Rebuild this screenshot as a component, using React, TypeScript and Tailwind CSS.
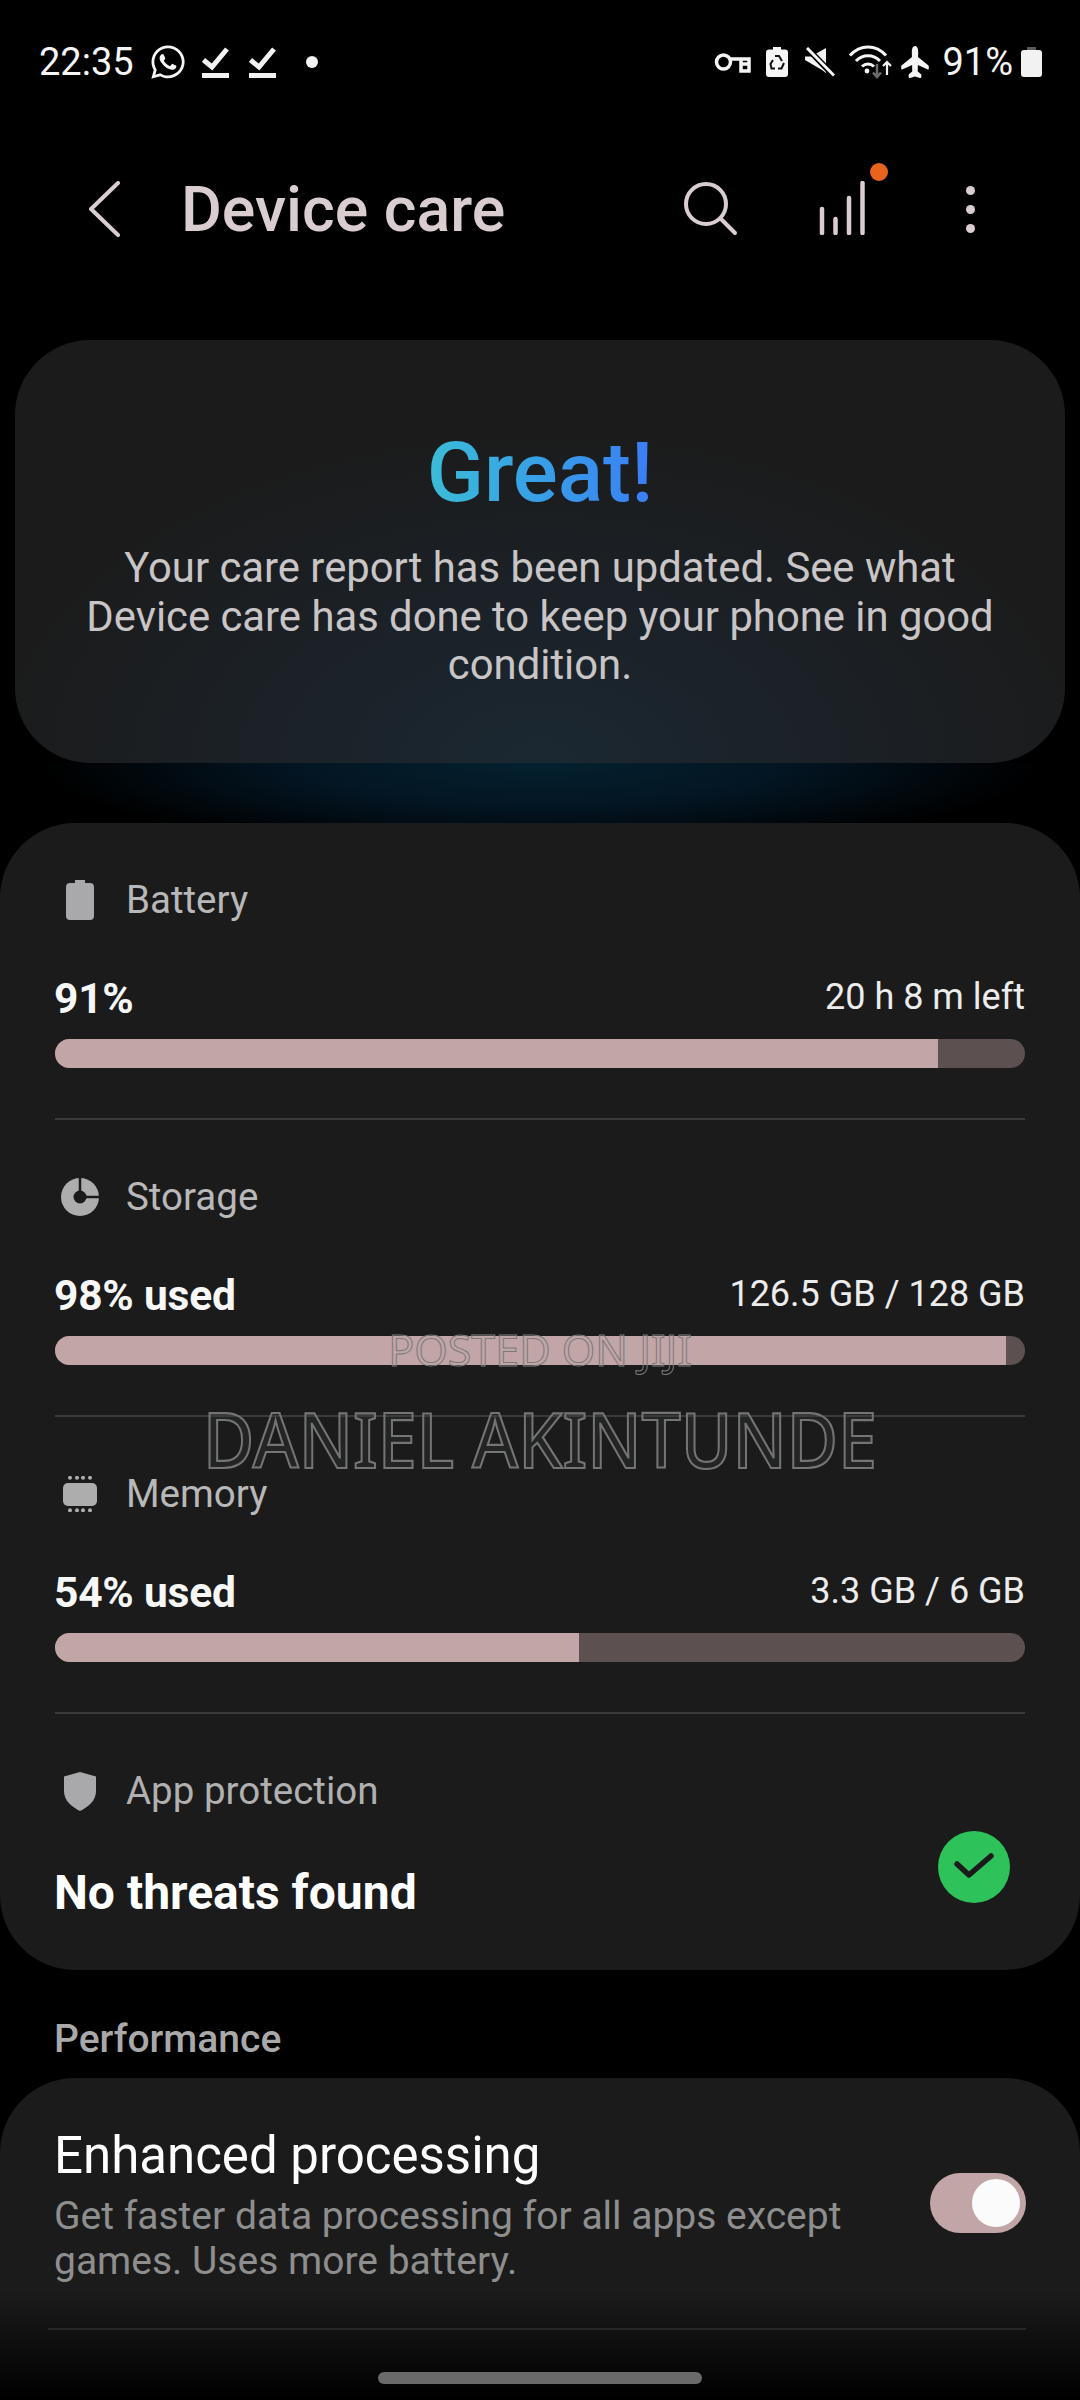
import React from "react";
import { FaWhatsapp } from "react-icons/fa";
import { IoAirplane } from "react-icons/io5";

const CheckDown = () => (
  <svg width="27" height="32" viewBox="0 0 27 32" fill="none" stroke="#f2f2f2">
    <path d="M1.5 14 L10 21 L25 3" strokeWidth="5" />
    <path d="M0 29.5 H27" strokeWidth="5" />
  </svg>
);

const Key = () => (
  <svg width="37" height="22" viewBox="0 0 37 22" fill="none" stroke="#f5f5f5" strokeWidth="3.5">
    <circle cx="9.5" cy="11" r="7" />
    <path d="M16 8 H35 V13 M27 8 V20 H35 V13 M27 13 H35" />
  </svg>
);

const BatteryRecycle = () => (
  <svg width="22" height="30" viewBox="0 0 22 30">
    <path d="M7 0 H15 V2.5 H19 Q22 2.5 22 5.5 V27 Q22 30 19 30 H3 Q0 30 0 27 V5.5 Q0 2.5 3 2.5 H7 Z" fill="#f5f5f5" />
    <path d="M9 9 L13 9 L16 14 M18 16 L15.5 21.5 H12 M9 21.5 H5.5 L4.5 17 L7 13" fill="none" stroke="#111" strokeWidth="2" />
  </svg>
);

const Mute = () => (
  <svg width="30" height="30" viewBox="0 0 30 30">
    <path d="M0 9.5 H6 L21 1 V26 L17 23 L0 13 Z" fill="#f5f5f5" />
    <path d="M1 0 L29 29" stroke="#000" strokeWidth="6" />
    <path d="M2 1 L29 28.5" stroke="#f5f5f5" strokeWidth="3" />
  </svg>
);

const Wifi = () => (
  <svg width="44" height="34" viewBox="0 0 44 34" fill="none">
    <path d="M1 10.5 C11 -1 27 -1 37 10.5" stroke="#f5f5f5" strokeWidth="3" />
    <path d="M7 16 C13.5 9 24.5 9 31 16" stroke="#f5f5f5" strokeWidth="3" />
    <path d="M13 21.5 C16.5 18 21.5 18 25 21.5" stroke="#f5f5f5" strokeWidth="3" />
    <circle cx="18" cy="26" r="2.4" fill="#f5f5f5" />
    <path d="M28 19 V32 M24 27.5 L28 32 L32 27.5" stroke="#6b6b6b" strokeWidth="2.5" />
    <path d="M38 30 V17 M34 21 L38 17 L42 21" stroke="#f5f5f5" strokeWidth="2.2" />
  </svg>
);

const Search = () => (
  <svg width="54" height="54" viewBox="0 0 54 54" fill="none" stroke="#d9cdd0" strokeWidth="4" strokeLinecap="round">
    <circle cx="22" cy="22" r="20" />
    <path d="M37 37 L51 51" />
  </svg>
);

const Stats = () => (
  <div className="relative w-[66px] h-[64px]">
    <svg className="absolute left-0 top-[4px]" width="48" height="54" viewBox="0 0 48 54" stroke="#d9cdd0" strokeWidth="4.5" strokeLinecap="round">
      <path d="M3 28 V52 M16.5 38 V52 M30 17 V52 M43.5 2 V52" />
    </svg>
    <span className="absolute right-[-3px] top-[-14px] w-[18px] h-[18px] rounded-full bg-[#e8641c]" />
  </div>
);

const BatteryIcon = () => (
  <svg width="28" height="40" viewBox="0 0 28 40">
    <path d="M9 0 H19 V3 H24 Q28 3 28 7 V36 Q28 40 24 40 H4 Q0 40 0 36 V7 Q0 3 4 3 H9 Z" fill="#a9a9ab" />
  </svg>
);

const StorageIcon = () => (
  <svg width="38" height="38" viewBox="0 0 38 38">
    <circle cx="19" cy="19" r="19" fill="#adadad" />
    <circle cx="19" cy="19" r="6.5" fill="#1b1b1b" />
    <path d="M19 0 V19 M19 19 H38" stroke="#1b1b1b" strokeWidth="2.5" />
  </svg>
);

const MemoryIcon = () => (
  <svg width="36" height="36" viewBox="0 0 36 36" fill="#adadad">
    <rect x="1" y="7" width="34" height="23" rx="5" />
    {[6, 13, 19, 26].map((x) => (
      <React.Fragment key={x}>
        <circle cx={x + 2} cy="1.8" r="2" />
        <circle cx={x + 2} cy="34.2" r="2" />
      </React.Fragment>
    ))}
  </svg>
);

const ShieldIcon = () => (
  <svg width="32" height="39" viewBox="0 0 32 39">
    <path d="M16 0 L32 4.5 V19 C32 29 24 35 16 39 C8 35 0 29 0 19 V4.5 Z" fill="#a9a9ab" />
  </svg>
);

type RowProps = {
  icon: React.ReactNode;
  label: string;
  value: string;
  right: string;
  fill: string;
};

const UsageRow = ({ icon, label, value, right, fill }: RowProps) => (
  <div className="h-[297px] mx-[55px] border-b-2 border-[#3a3a3a] flex flex-col">
    <div className="flex items-center h-[54px] mt-[50px]">
      <div className="w-[52px] ml-[-1px] flex justify-center">{icon}</div>
      <span className="ml-[20px] text-[38.5px] leading-[54px] text-[#b8b8b8]">{label}</span>
    </div>
    <div className="flex justify-between items-center h-[50px] mt-[47px]">
      <span className="ml-[-1px] text-[42.5px] font-bold text-[#f7f7f7] tracking-[-0.2px]">{value}</span>
      <span className="text-[36px] text-[#ececec] mt-[-5px]">{right}</span>
    </div>
    <div className="mt-[15px] h-[29px] rounded-full bg-[#5c5051] overflow-hidden">
      <div className={`h-full bg-[#c1a5a7] ${fill}`} />
    </div>
  </div>
);

export default function App() {
  return (
    <div className="relative h-[2400px] w-[1080px] overflow-hidden bg-black font-['Roboto',sans-serif]">
      {/* status bar */}
      <div className="flex items-center justify-between h-[124px] pl-[39px] pr-[38px] text-[#f5f5f5]">
        <div className="flex items-center">
          <span className="text-[38px] leading-none">22:35</span>
          <FaWhatsapp className="ml-[15px]" size={38} color="#f5f5f5" />
          <span className="ml-[15px]"><CheckDown /></span>
          <span className="ml-[20px]"><CheckDown /></span>
          <span className="ml-[30px] w-[12px] h-[12px] rounded-full bg-[#f2f2f2]" />
        </div>
        <div className="flex items-center">
          <Key />
          <span className="ml-[15px]"><BatteryRecycle /></span>
          <span className="ml-[17px]"><Mute /></span>
          <span className="ml-[14px]"><Wifi /></span>
          <IoAirplane className="ml-[5px] -rotate-90" size={34} color="#f5f5f5" />
          <span className="ml-[10px] text-[38px] leading-none">91%</span>
          <span className="ml-[8px]">
            <svg width="21" height="30" viewBox="0 0 21 30">
              <path d="M6 0 H15 V3 H6 Z" fill="#5a5a5a" />
              <path d="M3 3 H18 Q21 3 21 6 V27 Q21 30 18 30 H3 Q0 30 0 27 V6 Q0 3 3 3 Z" fill="#f2f2f2" />
            </svg>
          </span>
        </div>
      </div>

      {/* toolbar */}
      <div className="flex items-center h-[112px] mt-[29px] pl-[89px]">
        <svg width="32" height="56" viewBox="0 0 32 56" fill="none" stroke="#d9cdd0" strokeWidth="4" strokeLinecap="round" strokeLinejoin="round">
          <path d="M29 2 L2 28 L29 54" />
        </svg>
        <span className="ml-[60px] mt-[2px] text-[62.6px] leading-none font-medium text-[#d9cdd0]">Device care</span>
        <div className="ml-[179px]"><Search /></div>
        <div className="ml-[81px]"><Stats /></div>
        <div className="ml-[81px] flex flex-col gap-[10px]">
          <span className="w-[9px] h-[9px] rounded-full bg-[#d9cdd0]" />
          <span className="w-[9px] h-[9px] rounded-full bg-[#d9cdd0]" />
          <span className="w-[9px] h-[9px] rounded-full bg-[#d9cdd0]" />
        </div>
      </div>

      {/* hero card */}
      <div className="mt-[75px] mx-[15px] h-[423px] rounded-[75px] bg-[radial-gradient(ellipse_560px_340px_at_50%_100%,#1b2832_0%,#1b2127_50%,#1b1b1b_100%)] flex flex-col items-center pt-[89px]">
        <span className="text-[84px] leading-[88px] font-medium bg-gradient-to-r from-[#3cbdd6] to-[#3b7df5] bg-clip-text text-transparent">Great!</span>
        <p className="mt-[27px] w-[930px] text-center text-[41.8px] leading-[48.5px] text-[#c9c5c6]">
          Your care report has been updated. See what Device care has done to keep your phone in good condition.
        </p>
      </div>
      <div className="h-[60px] bg-[radial-gradient(ellipse_500px_90px_at_50%_0%,#05212f_0%,#031522_50%,#000000_100%)]" />

      {/* main card */}
      <div className="h-[1147px] rounded-[75px] bg-[#1b1b1b]">
        <UsageRow icon={<BatteryIcon />} label="Battery" value="91%" right="20 h 8 m left" fill="w-[91%]" />
        <UsageRow icon={<StorageIcon />} label="Storage" value="98% used" right="126.5 GB / 128 GB" fill="w-[98%]" />
        <UsageRow icon={<MemoryIcon />} label="Memory" value="54% used" right="3.3 GB / 6 GB" fill="w-[54%]" />
        <div className="mx-[55px] flex flex-col">
          <div className="flex items-center h-[54px] mt-[50px]">
            <div className="w-[52px] ml-[-1px] flex justify-center"><ShieldIcon /></div>
            <span className="ml-[20px] text-[38.5px] leading-[54px] text-[#b0b0b0]">App protection</span>
          </div>
          <div className="flex justify-between items-start mt-[13px]">
            <span className="ml-[-1px] mt-[32px] text-[48px] leading-[60px] font-bold text-white">No threats found</span>
            <div className="w-[72px] h-[72px] mr-[15px] rounded-full bg-[#2dc35a] flex items-center justify-center">
              <svg width="40" height="28" viewBox="0 0 40 28" fill="none" stroke="#1b1b1b" strokeWidth="5.5" strokeLinecap="round" strokeLinejoin="round">
                <path d="M3 11 L15 22 L37 3" />
              </svg>
            </div>
          </div>
        </div>
      </div>

      {/* performance */}
      <div className="pl-[54px] h-[108px] pt-[47px] text-[39px] leading-[44px] font-medium text-[#a9a9a9]">Performance</div>
      <div className="h-[400px] rounded-t-[75px] bg-[#1b1b1b]">
        <div className="h-[252px] ml-[48px] mr-[54px] border-b-2 border-[#3a3a3a] flex justify-between items-start pl-[6px]">
          <div className="w-[830px] pt-[44px]">
            <div className="text-[51px] leading-[68px] text-white">Enhanced processing</div>
            <div className="mt-[4px] text-[39px] leading-[45px] text-[#8e8e8e]">
              Get faster data processing for all apps except games. Uses more battery.
            </div>
          </div>
          <div className="mt-[95px] w-[96px] h-[60px] rounded-full bg-[#c1a5a7] flex items-center justify-end pr-[6px]">
            <span className="w-[48px] h-[48px] rounded-full bg-[#fbfbfb]" />
          </div>
        </div>
      </div>

      {/* bottom fade and gesture bar */}
      <div className="absolute left-0 right-0 bottom-0 h-[110px] bg-gradient-to-b from-transparent to-black" />
      <div className="absolute left-[378px] top-[2372px] w-[324px] h-[12px] rounded-full bg-[#6a6a6a]" />

      {/* watermark */}
      <div className="absolute left-0 right-0 top-[1322px] text-center text-[43px] leading-[56px] text-transparent [-webkit-text-stroke:1px_#7a7a7a] font-['Noto_Sans',sans-serif]">POSTED ON JIJI</div>
      <div className="absolute left-0 right-0 top-[1385px] text-center text-[70px] leading-[106px] font-medium scale-y-110 text-[rgba(60,66,68,0.25)] [-webkit-text-stroke:2px_#747474] font-['Noto_Sans',sans-serif]">DANIEL AKINTUNDE</div>
    </div>
  );
}
